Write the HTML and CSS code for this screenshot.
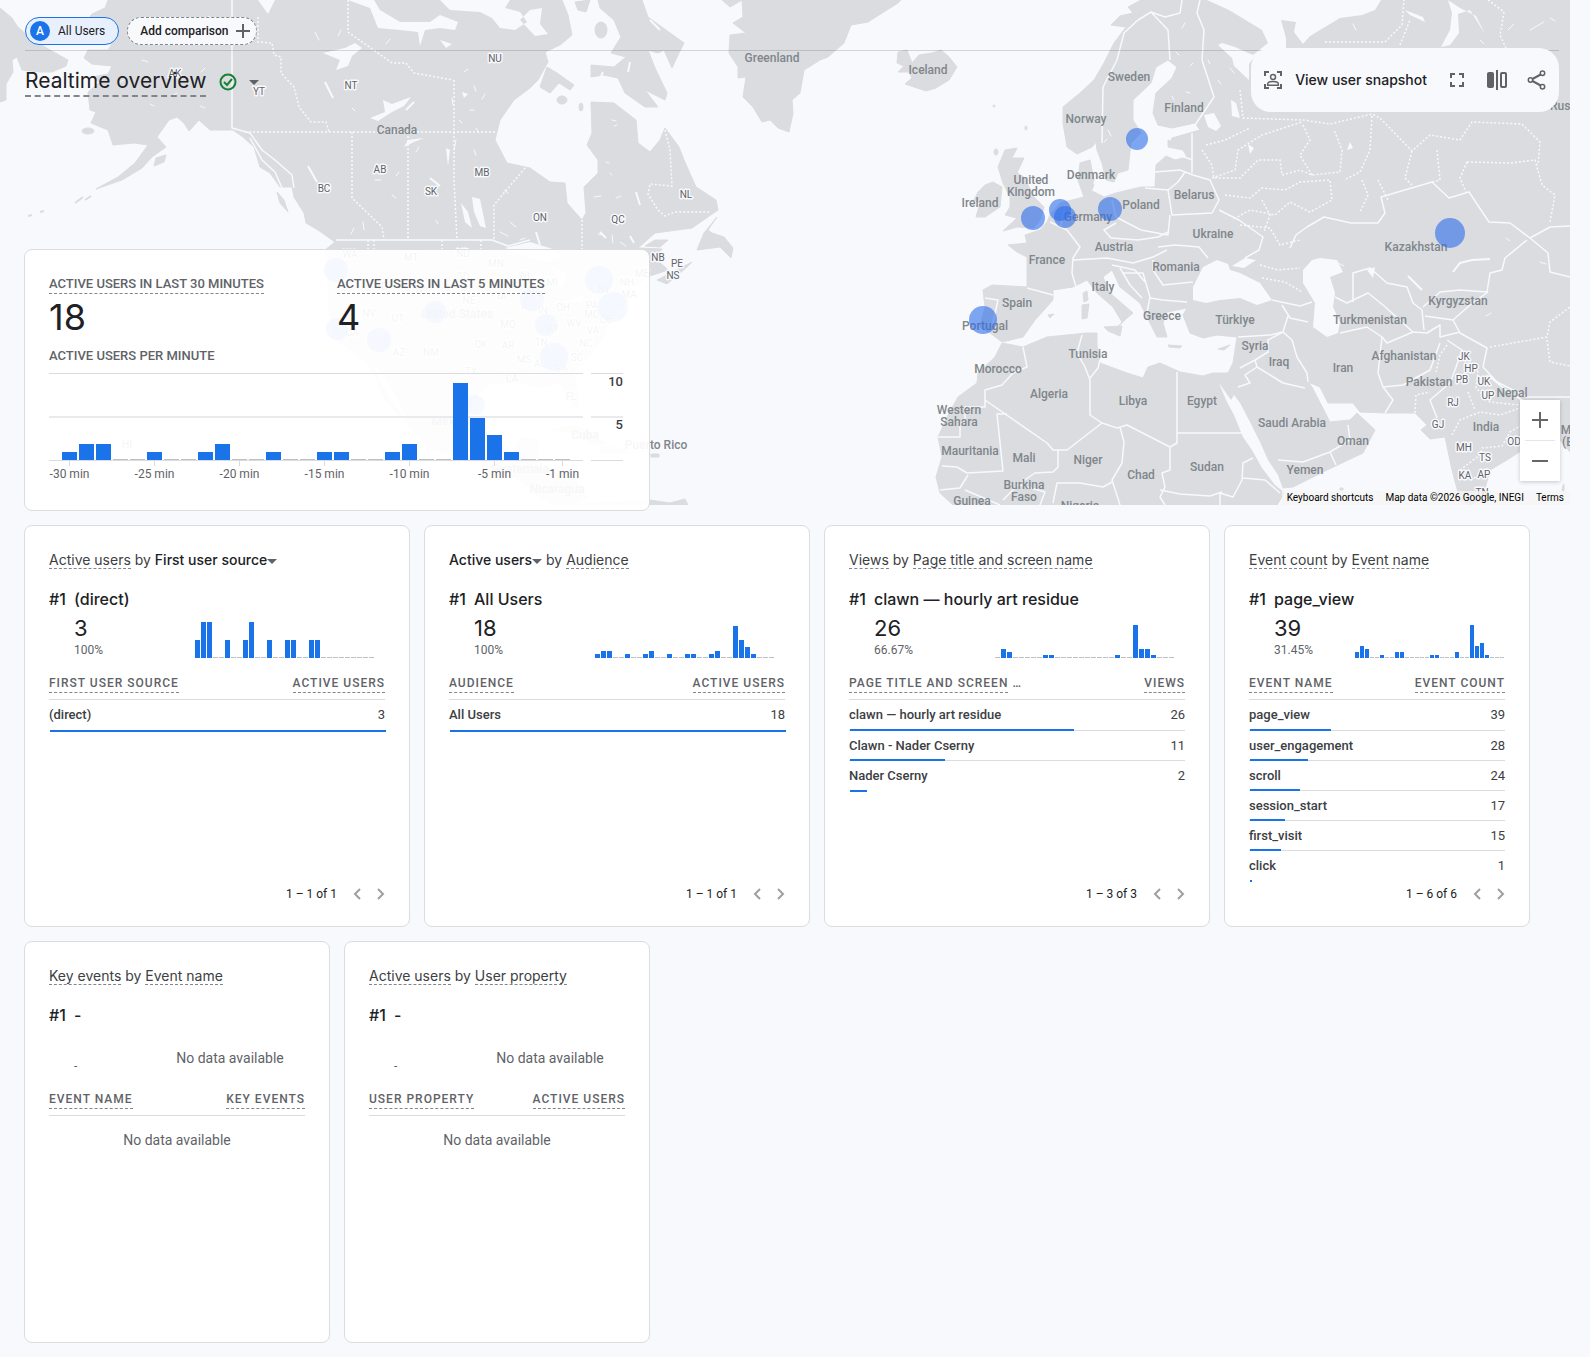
FILE: index.html
```html
<!DOCTYPE html>
<html lang="en">
<head>
<meta charset="utf-8">
<meta name="viewport" content="width=device-width, initial-scale=1">
<title>Realtime overview</title>
<link rel="stylesheet" href="styles.css">
</head>
<body>
<div class="map">
<svg class="map-canvas" viewBox="0 0 1570 505" preserveAspectRatio="xMidYMin slice" aria-label="Map of active users">
  <g class="land">
    <path d="M0 8L12 18 17 26 30 38 50 50 68 60 66 66 52 72 40 72 22 70 17 57 12 60 13 72 6 84 6 100 0 102Z"/>
    <path d="M108 0L105 8 92 14 86 22 90 34 112 44 108 50 88 50 84 58 92 64 112 66 108 74 92 77 100 82 88 92 90 110 96 112 91 123 108 130 113 145 134 143 148 145 135 163 118 177 96 189 122 180 142 168 152 157 166 147 157 137 169 120 177 117 184 123 189 131 199 120 210 130 233 130 243 137 254 147 260 167 270 173 280 187 292 187 294 197 304 213 306 223 318 230 335 242 325 250 328 283 328 307 333 337 350 350 367 362 373 373 385 400 400 417 410 425 390 400 378 377 372 363 383 373 400 403 410 427 430 447 463 460 490 467 520 480 533 493 553 505 573 505 587 497 572 473 537 467 538 440 520 437 513 453 493 457 477 440 470 420 473 400 490 383 520 383 540 387 560 383 577 410 578 393 573 373 597 347 603 337 610 317 627 303 630 290 647 277 668 270 655 258 662 249 638 248 655 233 692 228 718 210 716 200 696 187 684 160 679 147 665 128 660 140 650 152 638 143 636 120 614 103 591 102 592 133 587 145 598 160 598 173 584 187 586 213 582 220 567 203 565 183 550 182 530 168 507 163 495 140 500 120 514 100 530 88 538 80 548 62 545 52 560 45 572 35 568 15 562 0Z"/>
    <path d="M598 0L642 0 648 17 666 30 684 43 679 53 672 68 664 50 658 53 648 50 655 68 667 93 665 100 645 90 658 107 645 107 625 93 618 78 604 75 591 77 591 65 614 67 626 57 611 53 621 37 614 20 600 8Z"/>
    <path d="M547 67L557 73 574 85 570 90 559 83 550 93 540 87ZM717 217L704 233 697 250 720 247 731 258 733 248 724 237 712 233 708 230ZM657 280L673 272 692 262 687 267 667 284ZM645 246L655 240 668 240 660 247ZM575 2L590 0 586 12 578 10ZM156 158L166 155 164 162 154 166Z"/>
    <ellipse cx="601" cy="30" rx="6" ry="8"/><ellipse cx="562" cy="100" rx="5" ry="4"/><ellipse cx="581" cy="107" rx="2" ry="4"/><ellipse cx="88" cy="131" rx="6" ry="3"/>
    <path d="M75 203l8-6M85 200l6-4M28 216l4-1M40 212l4-1" class="islet"/>
    <path d="M277 192L284 200 288 212 280 203ZM553 430L575 425 600 440 610 445 590 443 570 432ZM600 447L622 448 630 453 602 454ZM651 454h8v3h-8ZM650 500L670 503 685 499 688 505 560 505Z"/>
    <path d="M722 0L730 7 742 0 743 17 733 23 746 33 730 35 729 53 738 67 738 78 746 77 743 97 753 107 762 122 770 120 778 128 789 132 793 113 792 100 800 93 804 70 817 62 820 60 828 57 844 43 851 25 868 22 898 3 901 0Z"/>
    <path d="M897 63L898 52 907 50 912 63 919 55 932 53 941 50 949 57 957 67 949 80 936 88 926 91 905 84 912 78 909 72 898 72 904 66Z"/>
    <path d="M1005 150L1017 148 1012 158 1024 158 1017 173 1024 177 1034 197 1044 207 1040 220 1034 228 1017 227 1003 231 1017 218 1005 215 1010 207 1010 197 1003 183 998 167ZM978 192L985 185 993 182 1002 187 1000 207 985 217 976 217 980 203 974 200Z"/>
    <ellipse cx="994" cy="106" rx="1" ry="1"/><ellipse cx="1026" cy="128" rx="1" ry="2"/><ellipse cx="996" cy="152" rx="2" ry="3"/>
    <path d="M1141 0L1128 7 1133 13 1120 16 1111 25 1126 27 1114 43 1104 63 1094 80 1080 93 1063 107 1063 123 1067 147 1077 154 1092 147 1096 142 1097 150 1102 163 1106 180 1114 182 1118 173 1128 170 1131 143 1141 133 1133 120 1133 100 1151 83 1156 67 1168 60 1177 67 1172 78 1156 93 1153 113 1158 125 1172 128 1195 123 1200 130 1172 138 1168 147 1183 150 1187 157 1175 160 1166 156 1156 165 1155 187 1141 187 1116 193 1104 197 1090 190 1094 180 1090 160 1080 163 1078 180 1084 197 1060 203 1050 215 1047 222 1040 230 1025 235 1027 243 1008 245 1017 252 1027 257 1027 287 992 285 983 290 985 307 980 327 990 333 1002 342 1023 337 1035 320 1053 300 1053 290 1073 287 1087 280 1097 293 1113 307 1122 322 1117 328 1127 318 1133 313 1110 293 1103 277 1112 270 1120 287 1140 303 1147 317 1157 337 1167 337 1163 323 1167 312 1187 308 1183 315 1190 333 1203 338 1217 335 1237 337 1233 363 1228 373 1213 373 1203 376 1180 372 1160 363 1148 367 1143 378 1127 373 1100 363 1097 345 1097 333 1087 333 1047 337 1023 347 1002 343 995 357 978 373 977 383 958 397 948 415 938 437 942 457 936 477 940 493 953 505 1277 505 1284 494 1282 488 1293 487 1327 470 1363 453 1375 430 1357 413 1350 420 1330 422 1312 387 1308 382 1320 387 1328 403 1353 403 1360 412 1387 413 1415 413 1427 425 1421 430 1430 439 1445 437 1452 470 1460 500 1470 505 1482 500 1490 470 1507 460 1527 447 1560 440 1570 452 1570 0Z"/>
    <path d="M1083 293L1087 291 1088 300 1084 302ZM1082 305L1089 304 1087 318 1082 319ZM1104 327L1122 326 1120 336 1108 331ZM1168 345L1182 346 1180 348 1169 347ZM1218 349L1230 345 1224 350ZM1048 315L1054 314 1050 318ZM1563 485l1-1v7h-2ZM1088 184L1094 184 1092 190ZM1116 168L1119 160 1117 170ZM1168 140L1174 143 1168 146ZM1340 488h3v2h-3Z"/>
  </g>
  <g class="water">
    <path d="M348 0L370 8 378 28 400 30 418 32 420 46 425 30 440 28 455 30 458 22 440 15 430 22 400 22 380 10 374 0ZM440 0L450 10 480 12 492 18 500 28 515 30 527 22 520 12 505 8 510 0ZM323 53L345 48 355 43 362 48 352 56 348 66 336 70 340 60ZM370 118L385 112 383 100 392 104 411 97 404 106 392 112 378 121ZM404 147L408 140 424 138 414 142ZM472 197L480 199 486 228 480 226 474 212ZM461 203L468 212 472 228 465 222ZM520 20L530 10 542 8 540 24 548 34 535 36ZM440 40L452 44 446 48ZM462 92L468 94 464 98ZM446 148L450 150 448 166ZM258 0L275 0 268 14Z"/>
    <path d="M505 248L530 242 556 250 562 258 545 262 530 258ZM533 275L541 270 539 300 533 300ZM551 266L568 275 560 290ZM563 303L586 294 580 302ZM590 290L604 286 600 292ZM1118 176l4-6M1107 185l2-4"/>
    <path d="M1207 0L1229 10 1262 30 1268 43 1253 55 1235 47 1222 43 1218 45 1232 58 1234 66 1249 80 1249 64 1256 55 1270 50 1286 48 1286 38 1281 20 1296 22 1294 32 1303 44 1310 36 1325 27 1340 18 1362 15 1375 10 1381 0ZM1395 0L1405 10 1423 17 1425 22 1410 15ZM1448 0L1452 13 1450 30 1441 47 1450 45 1459 33 1458 14 1470 10 1485 34 1476 16 1460 8Z"/>
    <path d="M1204 115L1214 113 1221 126 1216 131 1208 127ZM1231 100L1236 103 1240 118 1232 116ZM1193 287L1203 267 1217 260 1228 264 1230 270 1240 273 1260 283 1272 300 1257 305 1240 298 1220 300 1206 303 1193 300ZM1232 266L1245 258 1256 260 1244 268ZM1303 270L1312 260 1320 258 1337 260 1343 272 1330 277 1335 293 1333 307 1340 322 1338 333 1327 337 1313 327 1315 303 1303 283ZM1367 270L1375 267 1373 278ZM1219 383L1226 400 1234 415 1243 437 1252 450 1262 468 1275 485 1284 492 1278 475 1268 460 1260 442 1250 422 1240 403 1234 395 1231 400ZM1248 144L1254 148 1250 154ZM1350 142L1353 148 1347 150ZM1176 75l2 3M1150 22l5 6"/>
    <path class="lake-line" d="M1453 272L1460 263 1472 260 1490 259M1408 276L1422 290M308 166L317 182M325 82L333 98M430 178L440 186M414 102L406 110M597 85L603 72M636 192L640 205M600 232L606 238M630 236L634 243M536 232L540 245M630 62L628 72M650 20L660 30"/>
    <path class="pond-line" d="M315 32l4 8M338 36l3-6M386 44l4-5M352 108l3 3M375 180h6M396 176l3-4M416 152l3-5M436 220l2 4M354 228l-3 6M363 222l1 8M392 195l4 3M452 98l1 7M464 72l4-3M474 86l2 5M485 94l-3 5M470 110h4M459 120l3 3M476 128l3 5M456 140l-2 10M474 150l2 5M612 120l4 1M614 126l3-1M606 162l3 1M610 173l2 2M594 197l7-1M616 198l5-2M612 235l1 8M598 234l5 1M620 242l6 4M640 120l6 6M500 232l8 4M510 222l6 5M520 240l5-2M504 190l4 3M120 82l6-3M150 104l4 2M172 96l5-3M205 68l-4 4M142 60l6 2M160 36l-8 4M182 24l5 4M208 16l5 3M226 40l-4 5M200 106l5 2M1182 28l3-5M1176 52l3 3M1190 66l3-3M1186 92l4 1M1172 96l2 4M1208 60l2 4M1218 80l3 4M1230 68l4 5M1108 130l3 6M1104 142l3-3M1508 30l6-6M1530 30l14-8M1480 40l4 4M1524 60l-6 8M1550 18l5 3M1356 30l-3-6M1506 238l4 3M1540 262l6 2M1486 316l5-3M1336 262l8 4"/>
  </g>
  <g class="border">
    <path d="M232 0V128L250 133 262 150 275 160 292 175 294 188M336 240H492L508 246 530 240M250 138L262 160 275 172 282 188"/>
    <path d="M1102 143L1103 87 1117 60 1124 33 1138 20 1151 12 1168 30 1170 60M1151 12L1165 17 1180 13 1182 0M1200 0L1197 13 1204 30 1202 60 1214 97 1195 125M1192 133V173M1172 153L1193 160M1155 172L1180 170 1193 175 1210 180 1219 200 1212 213 1172 215 1168 190 1178 182 1185 172M1168 190L1145 188M1170 215L1168 235 1141 230 1116 217 1112 200M1219 210L1239 220 1263 237 1259 250 1245 258M1116 223L1104 230 1111 238 1138 240 1158 237 1168 232M1158 247L1175 245 1199 247 1208 258M1050 222L1067 230 1080 247 1073 258 1072 273 1076 287M1065 205L1062 220 1060 228M1073 260L1107 258 1133 263 1153 257 1167 250M1123 273L1143 273 1150 297 1147 313M1153 260V270L1163 285 1193 282M1150 298L1163 300 1187 302M1027 288L1053 295M985 298L998 300 992 327M1112 265L1135 270 1145 282M1120 268L1130 285 1142 298"/>
    <path d="M1023 347L1027 367 1013 373 1002 385 985 390V400L1047 443 1053 450H1067L1102 423 1090 415V380L1085 367 1077 353 1082 335M1100 360L1098 368 1090 378M1102 423L1117 428 1127 425 1170 447 1177 443V372M1177 433H1243M1170 447V470L1162 473 1165 487 1160 497 1165 505M1120 427L1124 442 1122 463 1112 480 1120 505M1112 482L1103 487 1080 483 1057 483 1053 503M1058 450V467L1053 472 1035 473 1020 483 1003 500M985 400V407H965V423H960V437H938M1007 414H997L1003 471 967 473 957 467 942 466M940 490L960 488 968 475M1253 458L1243 463 1242 480 1233 497 1220 493V505M1243 478L1265 480 1280 493M1160 490L1180 494 1210 496 1222 492M965 490L1000 505M1020 485L1045 492 1040 505"/>
    <path d="M1238 337L1270 335 1283 332 1292 340 1297 357 1307 373 1308 382M1283 332L1268 340V352L1255 360 1240 368M1255 360L1257 367 1283 383 1305 388M1257 367L1245 375 1250 383 1238 387M1278 460L1303 462 1330 452 1350 440 1348 425M1330 452L1336 465M1382 337L1378 373 1383 387 1393 400 1385 413M1340 333L1367 327 1382 337 1387 343 1413 332 1427 333 1440 325V337L1460 332M1383 387L1403 385 1430 370 1440 343M1447 340L1462 350 1455 370 1450 383 1430 400 1437 418M1353 302V273L1370 268 1387 283 1407 287 1413 303 1422 310 1424 330M1335 297L1347 303 1368 293 1383 305 1413 332M1423 307L1440 292 1460 290 1487 292 1490 273 1502 270 1505 258 1527 240M1425 316L1453 320 1470 305 1488 292M1282 305L1290 318 1308 322M1272 300L1300 306 1312 302M1283 332L1288 316"/>
    <path d="M1290 248L1296 235 1307 227 1324 217 1351 223 1378 223 1385 213 1381 197 1432 182 1449 198 1469 192 1489 222 1510 223 1530 238 1550 227 1570 226M1530 238L1548 253 1550 272 1570 277M1453 320L1460 333 1487 348 1483 367 1497 382 1527 397H1570M1487 375L1510 393 1527 403"/>
  </g>
  <g class="region">
    <path d="M258 17V42L272 43 274 55 281 57V73L294 87 299 107 311 122H326L329 132M245 132H495M352 132V198L382 227 384 240M408 132V240M454 80V180L457 240M348 0V32L392 63H406L414 73 453 80M525 168L494 205V240M582 220V260M665 130L670 150 672 186 650 184 648 194 658 210 665 216 675 212H710"/>
    <path d="M368 240V262M374 240V300M442 240V280M481 240V290M340 265H370M328 297H400M380 297V340M360 297L362 320 385 345M400 340V365M410 300V340M442 310H500M442 280H482M481 290H520M495 325H530M500 345H600M455 345V375M520 350V380M533 350V382M550 345V380M500 370H515M580 249V260M545 300V320M565 300V318"/>
    <path d="M1240 90L1243 118 1303 120 1330 124 1372 114 1380 118 1412 151 1430 135 1460 140 1472 122 1522 124 1540 142 1538 165M1206 145L1225 140 1250 128M1212 178L1235 170 1238 150 1262 135 1302 122M1202 150L1212 165 1214 178 1240 178 1258 160 1280 160 1282 175 1300 170 1312 175 1340 172 1342 150 1334 130M1303 125L1310 140 1300 155 1312 175M1372 116L1370 150 1360 172 1344 180M1225 195L1250 198 1262 188 1285 190 1300 182 1330 180 1332 200 1310 212 1290 202 1275 215 1250 210 1232 220M1240 225L1270 228 1280 245 1300 240M1412 151L1405 178 1412 185M1437 150L1440 180 1432 182M1467 162L1460 178 1466 192M1467 162L1510 163 1535 160 1542 185 1555 195 1550 222M1325 42H1385L1402 25 1404 0M1400 45L1410 20M1488 0L1504 12 1500 35 1506 48M1262 200L1270 215 1264 232M1362 180L1368 195 1360 212M1378 180L1388 200"/>
    <path d="M1490 347L1547 337 1550 322 1570 307M1547 340L1550 362 1570 366M1415 413L1416 395 1430 392M1447 345L1440 355 1436 372M1465 360L1478 372 1476 388 1490 402 1520 405M1452 435L1460 420 1480 412 1500 415 1520 408M1460 470L1480 455 1482 448 1502 446 1510 432 1530 420M1468 392L1475 410M1470 480L1490 470M1260 265L1278 270 1300 268M1262 278L1285 282 1302 292"/>
  </g>
  <g class="country">
    <text x="397" y="134">Canada</text><text x="772" y="62">Greenland</text><text x="928" y="74">Iceland</text><text x="980" y="207">Ireland</text><text x="1031" y="184">United</text><text x="1031" y="196">Kingdom</text><text x="1129" y="81">Sweden</text><text x="1086" y="123">Norway</text><text x="1184" y="112">Finland</text><text x="1091" y="179">Denmark</text><text x="1088" y="221">Germany</text><text x="1141" y="209">Poland</text><text x="1194" y="199">Belarus</text><text x="1114" y="251">Austria</text><text x="1213" y="238">Ukraine</text><text x="1416" y="251">Kazakhstan</text><text x="1568" y="110">Russia</text>
    <text x="1047" y="264">France</text><text x="1176" y="271">Romania</text><text x="1103" y="291">Italy</text><text x="1017" y="307">Spain</text><text x="985" y="330">Portugal</text><text x="1162" y="320">Greece</text><text x="1235" y="324">Türkiye</text><text x="1088" y="358">Tunisia</text><text x="998" y="373">Morocco</text><text x="1049" y="398">Algeria</text><text x="1133" y="405">Libya</text><text x="1202" y="405">Egypt</text><text x="959" y="414">Western</text><text x="959" y="426">Sahara</text><text x="970" y="455">Mauritania</text><text x="1024" y="462">Mali</text><text x="1088" y="464">Niger</text><text x="1141" y="479">Chad</text><text x="1207" y="471">Sudan</text><text x="1024" y="489">Burkina</text><text x="1024" y="501">Faso</text><text x="972" y="505">Guinea</text><text x="1080" y="510">Nigeria</text>
    <text x="1255" y="350">Syria</text><text x="1279" y="366">Iraq</text><text x="1343" y="372">Iran</text><text x="1370" y="324">Turkmenistan</text><text x="1458" y="305">Kyrgyzstan</text><text x="1404" y="360">Afghanistan</text><text x="1429" y="386">Pakistan</text><text x="1512" y="397">Nepal</text><text x="1486" y="431">India</text><text x="1292" y="427">Saudi Arabia</text><text x="1353" y="445">Oman</text><text x="1305" y="474">Yemen</text><text x="1586" y="434">Myanmar</text><text x="1584" y="446">(Burma)</text>
    <text x="457" y="318">United States</text><text x="451" y="425">Mexico</text><text x="585" y="439">Cuba</text><text x="656" y="449">Puerto Rico</text><text x="520" y="473">Guatemala</text><text x="557" y="493">Nicaragua</text>
  </g>
  <g class="state">
    <text x="175" y="77">AK</text><text x="259" y="95">YT</text><text x="351" y="89">NT</text><text x="495" y="62">NU</text><text x="380" y="173">AB</text><text x="324" y="192">BC</text><text x="431" y="195">SK</text><text x="482" y="176">MB</text><text x="540" y="221">ON</text><text x="618" y="223">QC</text><text x="686" y="198">NL</text><text x="658" y="261">NB</text><text x="677" y="267">PE</text><text x="673" y="279">NS</text><text x="127" y="448">HI</text>
    <text x="350" y="258">WA</text><text x="411" y="261">MT</text><text x="463" y="257">ND</text><text x="496" y="267">MN</text><text x="524" y="279">WI</text><text x="463" y="280">SD</text><text x="552" y="286">MI</text><text x="642" y="277">ME</text><text x="627" y="286">NH</text><text x="604" y="293">NY</text><text x="629" y="298">MA</text><text x="383" y="290">ID</text><text x="422" y="293">WY</text><text x="469" y="304">NE</text><text x="502" y="300">IA</text><text x="525" y="309">IL</text><text x="543" y="314">IN</text><text x="563" y="311">OH</text><text x="592" y="309">PA</text><text x="592" y="318">MD</text><text x="606" y="323">DE</text><text x="369" y="317">NV</text><text x="398" y="322">UT</text><text x="508" y="328">MO</text><text x="553" y="332">KY</text><text x="574" y="327">WV</text><text x="593" y="334">VA</text><text x="352" y="336">CA</text><text x="399" y="356">AZ</text><text x="431" y="356">NM</text><text x="481" y="348">OK</text><text x="508" y="349">AR</text><text x="541" y="346">TN</text><text x="586" y="347">NC</text><text x="524" y="363">MS</text><text x="577" y="361">SC</text><text x="540" y="367">AL</text><text x="561" y="372">GA</text><text x="471" y="375">TX</text><text x="512" y="382">LA</text><text x="571" y="400">FL</text>
    <text x="1464" y="360">JK</text><text x="1471" y="372">HP</text><text x="1462" y="383">PB</text><text x="1484" y="385">UK</text><text x="1488" y="399">UP</text><text x="1453" y="406">RJ</text><text x="1438" y="428">GJ</text><text x="1464" y="451">MH</text><text x="1514" y="445">OD</text><text x="1485" y="461">TS</text><text x="1465" y="479">KA</text><text x="1484" y="478">AP</text><text x="1482" y="496">TN</text>
  </g>
  <g class="users">
    <circle cx="1137" cy="139" r="11"/><circle cx="1110" cy="209" r="12"/><circle cx="1060" cy="210" r="11"/><circle cx="1065" cy="217" r="11"/><circle cx="1033" cy="218" r="12"/><circle cx="1450" cy="233" r="15"/><circle cx="983" cy="320" r="14"/>
    <circle cx="336" cy="270" r="12"/><circle cx="337" cy="329" r="11"/><circle cx="379" cy="340" r="12"/><circle cx="435" cy="312" r="11"/><circle cx="532" cy="299" r="12"/><circle cx="546" cy="325" r="11"/><circle cx="554" cy="357" r="14"/><circle cx="599" cy="280" r="14"/><circle cx="613" cy="307" r="15"/><circle cx="475" cy="405" r="10"/>
  </g>
</svg>
<div class="map-zoom">
  <button type="button" aria-label="Zoom in"><svg width="16" height="16" viewBox="0 0 16 16"><path d="M8 0v16M0 8h16"/></svg></button>
  <button type="button" aria-label="Zoom out"><svg width="16" height="16" viewBox="0 0 16 16"><path d="M0 8h16"/></svg></button>
</div>
<div class="map-credit"><button type="button">Keyboard shortcuts</button><span>Map data ©2026 Google, INEGI</span><a href="#terms">Terms</a></div>
</div>

<header class="comparisons">
  <button type="button" class="chip chip-active"><span class="avatar">A</span>All Users</button>
  <button type="button" class="chip chip-add">Add comparison<svg width="14" height="14" viewBox="0 0 14 14"><path d="M7 0v14M0 7h14"/></svg></button>
</header>

<div class="title-row">
  <div class="title-group">
    <h1>Realtime overview</h1>
    <svg class="check" width="18" height="18" viewBox="0 0 18 18"><circle cx="9" cy="9" r="7.500"/><path d="M5 9l3 3 5-6"/></svg>
    <button type="button" class="caret-button" aria-label="Report status"><span class="caret"></span></button>
  </div>
  <div class="toolbar">
    <button type="button" class="snapshot">
      <svg width="20" height="20" viewBox="0 0 20 20"><path d="M2 6V2h4M14 2h4v4M18 14v4h-4M6 18H2v-4"/><circle class="thin" cx="10" cy="7" r="2.500"/><path class="thin" d="M4.700 15.300v-1.300c0-1.600 2.500-2.500 5.300-2.500s5.300.9 5.300 2.500v1.300z"/></svg>
      View user snapshot
    </button>
    <button type="button" aria-label="Full screen"><svg width="20" height="20" viewBox="0 0 20 20"><path d="M4 8V4h4M12 4h4v4M16 12v4h-4M8 16H4v-4"/></svg></button>
    <button type="button" aria-label="Edit comparisons"><svg width="20" height="20" viewBox="0 0 20 20"><rect class="solid" x="0" y="2" width="7" height="16" rx="2"/><path d="M10 0v20"/><rect x="14" y="3" width="5" height="14" rx="1"/></svg></button>
    <button type="button" aria-label="Share report"><svg width="20" height="20" viewBox="0 0 20 20"><path d="M15.500 3.500L3.500 10l12 6.500"/><circle class="node" cx="15.500" cy="3.200" r="2.200"/><circle class="node" cx="3.500" cy="10" r="2.200"/><circle class="node" cx="15.500" cy="16.800" r="2.200"/></svg></button>
  </div>
</div>

<main class="cards">
  <section class="card overview">
    <div class="totals">
      <div><h2 class="label"><span class="term">Active users in last 30 minutes</span></h2><p class="big">18</p></div>
      <div><h2 class="label"><span class="term">Active users in last 5 minutes</span></h2><p class="big">4</p></div>
    </div>
    <h2 class="label">Active users per minute</h2>
    <div class="chart">
      <div class="plot">
        <div class="bars">
          <i style="height:8px"></i><i style="height:16px"></i><i style="height:16px"></i><i></i><i></i><i style="height:8px"></i><i></i><i></i><i style="height:8px"></i><i style="height:16px"></i><i></i><i></i><i style="height:8px"></i><i></i><i></i><i style="height:8px"></i><i style="height:8px"></i><i></i><i></i><i style="height:8px"></i><i style="height:16px"></i><i></i><i></i><i style="height:77px"></i><i style="height:42px"></i><i style="height:25px"></i><i style="height:8px"></i><i></i><i></i><i></i>
        </div>
        <div class="ticks">
          <span style="grid-column:1">-30 min</span><span style="grid-column:6">-25 min</span><span style="grid-column:11">-20 min</span><span style="grid-column:16">-15 min</span><span style="grid-column:21">-10 min</span><span style="grid-column:26">-5 min</span><span style="grid-column:30">-1 min</span>
        </div>
      </div>
      <div class="scale"><span>10</span><span>5</span></div>
    </div>
  </section>

  <section class="card">
    <h2 class="card-title"><span class="term">Active users</span> by <button type="button" class="pick">First user source<span class="caret"></span></button></h2>
    <p class="rank"><span>#1</span><span>(direct)</span></p>
    <div class="lead">
      <div class="lead-value"><strong>3</strong><small>100%</small></div>
      <svg class="spark" width="180" height="36" viewBox="0 0 180 36"><path class="zero" d="M0 35.500H180"/><path d="M0 36v-18h5v18zM6 36v-36h5v36zM12 36v-36h5v36zM30 36v-18h5v18zM48 36v-18h5v18zM54 36v-36h5v36zM72 36v-18h5v18zM90 36v-18h5v18zM96 36v-18h5v18zM114 36v-18h5v18zM120 36v-18h5v18z"/></svg>
    </div>
    <table>
      <thead><tr><th><span class="term">First user source</span></th><th><span class="term">Active users</span></th></tr></thead>
      <tbody>
        <tr><td>(direct)<i class="share" style="width:100%"></i></td><td>3</td></tr>
      </tbody>
    </table>
    <nav class="pager"><span>1 – 1 of 1</span><button type="button" aria-label="Previous" disabled><svg width="8" height="12" viewBox="0 0 8 12"><path d="M7 1L2 6l5 5"/></svg></button><button type="button" aria-label="Next" disabled><svg width="8" height="12" viewBox="0 0 8 12"><path d="M1 1l5 5-5 5"/></svg></button></nav>
  </section>

  <section class="card">
    <h2 class="card-title"><button type="button" class="pick">Active users<span class="caret"></span></button> by <span class="term">Audience</span></h2>
    <p class="rank"><span>#1</span><span>All Users</span></p>
    <div class="lead">
      <div class="lead-value"><strong>18</strong><small>100%</small></div>
      <svg class="spark" width="180" height="36" viewBox="0 0 180 36"><path class="zero" d="M0 35.500H180"/><path d="M0 36v-4h5v4zM6 36v-7h5v7zM12 36v-7h5v7zM30 36v-4h5v4zM48 36v-4h5v4zM54 36v-7h5v7zM72 36v-4h5v4zM90 36v-4h5v4zM96 36v-4h5v4zM114 36v-4h5v4zM120 36v-7h5v7zM138 36v-32h5v32zM144 36v-18h5v18zM150 36v-11h5v11zM156 36v-4h5v4z"/></svg>
    </div>
    <table>
      <thead><tr><th><span class="term">Audience</span></th><th><span class="term">Active users</span></th></tr></thead>
      <tbody>
        <tr><td>All Users<i class="share" style="width:100%"></i></td><td>18</td></tr>
      </tbody>
    </table>
    <nav class="pager"><span>1 – 1 of 1</span><button type="button" aria-label="Previous" disabled><svg width="8" height="12" viewBox="0 0 8 12"><path d="M7 1L2 6l5 5"/></svg></button><button type="button" aria-label="Next" disabled><svg width="8" height="12" viewBox="0 0 8 12"><path d="M1 1l5 5-5 5"/></svg></button></nav>
  </section>

  <section class="card">
    <h2 class="card-title"><span class="term">Views</span> by <span class="term">Page title and screen name</span></h2>
    <p class="rank"><span>#1</span><span>clawn — hourly art residue</span></p>
    <div class="lead">
      <div class="lead-value"><strong>26</strong><small>66.67%</small></div>
      <svg class="spark" width="180" height="36" viewBox="0 0 180 36"><path class="zero" d="M0 35.500H180"/><path d="M6 36v-9h5v9zM12 36v-6h5v6zM48 36v-3h5v3zM54 36v-3h5v3zM120 36v-3h5v3zM138 36v-33h5v33zM144 36v-9h5v9zM150 36v-9h5v9zM156 36v-3h5v3z"/></svg>
    </div>
    <table>
      <thead><tr><th><span class="term">Page title and screen</span> …</th><th><span class="term">Views</span></th></tr></thead>
      <tbody>
        <tr><td>clawn — hourly art residue<i class="share" style="width:66.67%"></i></td><td>26</td></tr>
        <tr><td>Clawn - Nader Cserny<i class="share" style="width:28.21%"></i></td><td>11</td></tr>
        <tr><td>Nader Cserny<i class="share" style="width:5.13%"></i></td><td>2</td></tr>
      </tbody>
    </table>
    <nav class="pager"><span>1 – 3 of 3</span><button type="button" aria-label="Previous" disabled><svg width="8" height="12" viewBox="0 0 8 12"><path d="M7 1L2 6l5 5"/></svg></button><button type="button" aria-label="Next" disabled><svg width="8" height="12" viewBox="0 0 8 12"><path d="M1 1l5 5-5 5"/></svg></button></nav>
  </section>

  <section class="card narrow">
    <h2 class="card-title"><span class="term">Event count</span> by <span class="term">Event name</span></h2>
    <p class="rank"><span>#1</span><span>page_view</span></p>
    <div class="lead">
      <div class="lead-value"><strong>39</strong><small>31.45%</small></div>
      <svg class="spark" width="150" height="36" viewBox="0 0 150 36"><path class="zero" d="M0 35.500H150"/><path d="M0 36v-6h4v6zM5 36v-12h4v12zM10 36v-9h4v9zM25 36v-3h4v3zM40 36v-6h4v6zM45 36v-6h4v6zM75 36v-3h4v3zM80 36v-3h4v3zM100 36v-6h4v6zM115 36v-33h4v33zM120 36v-12h4v12zM125 36v-15h4v15zM130 36v-3h4v3z"/></svg>
    </div>
    <table>
      <thead><tr><th><span class="term">Event name</span></th><th><span class="term">Event count</span></th></tr></thead>
      <tbody>
        <tr><td>page_view<i class="share" style="width:31.45%"></i></td><td>39</td></tr>
        <tr><td>user_engagement<i class="share" style="width:22.58%"></i></td><td>28</td></tr>
        <tr><td>scroll<i class="share" style="width:19.35%"></i></td><td>24</td></tr>
        <tr><td>session_start<i class="share" style="width:13.71%"></i></td><td>17</td></tr>
        <tr><td>first_visit<i class="share" style="width:12.1%"></i></td><td>15</td></tr>
        <tr><td>click<i class="share" style="width:0.81%"></i></td><td>1</td></tr>
      </tbody>
    </table>
    <nav class="pager"><span>1 – 6 of 6</span><button type="button" aria-label="Previous" disabled><svg width="8" height="12" viewBox="0 0 8 12"><path d="M7 1L2 6l5 5"/></svg></button><button type="button" aria-label="Next" disabled><svg width="8" height="12" viewBox="0 0 8 12"><path d="M1 1l5 5-5 5"/></svg></button></nav>
  </section>

  <section class="card narrow">
    <h2 class="card-title"><span class="term">Key events</span> by <span class="term">Event name</span></h2>
    <p class="rank"><span>#1</span><span>-</span></p>
    <div class="lead">
      <div class="lead-value"><strong></strong><small>-</small></div>
      <p class="empty">No data available</p>
    </div>
    <table>
      <thead><tr><th><span class="term">Event name</span></th><th><span class="term">Key events</span></th></tr></thead>
      <tbody><tr class="empty-row"><td colspan="2">No data available</td></tr></tbody>
    </table>
  </section>

  <section class="card narrow">
    <h2 class="card-title"><span class="term">Active users</span> by <span class="term">User property</span></h2>
    <p class="rank"><span>#1</span><span>-</span></p>
    <div class="lead">
      <div class="lead-value"><strong></strong><small>-</small></div>
      <p class="empty">No data available</p>
    </div>
    <table>
      <thead><tr><th><span class="term">User property</span></th><th><span class="term">Active users</span></th></tr></thead>
      <tbody><tr class="empty-row"><td colspan="2">No data available</td></tr></tbody>
    </table>
  </section>
</main>
</body>
</html>
```
FILE: styles.css
```css
* { box-sizing: border-box; }

:root {
  --page: #f8f9fc;
  --land: #dadce0;
  --ink: #202124;
  --text: #3c4043;
  --muted: #5f6368;
  --line: #dadce0;
  --blue: #1a73e8;
  --display: Inter, Roboto, sans-serif;
}

body {
  margin: 0;
  position: relative;
  background: var(--page);
  color: var(--ink);
  font: 12px/16px Roboto, sans-serif;
}

h1, h2, p { margin: 0; font-weight: 400; }

button {
  margin: 0;
  padding: 0;
  border: 0;
  background: none;
  color: inherit;
  font: inherit;
  cursor: pointer;
}

svg { display: block; }

/* Map */
.map {
  position: absolute;
  top: 0;
  left: 0;
  right: 20px;
  height: 505px;
  overflow: hidden;
}
.map-canvas { width: 100%; height: 100%; }
.land { fill: var(--land); stroke: var(--land); stroke-width: 1; stroke-linejoin: round; }
.islet { stroke-width: 2; }
.water { fill: var(--page); }
.lake-line { fill: none; stroke: var(--page); stroke-width: 2; }
.pond-line { fill: none; stroke: var(--page); stroke-width: 1; stroke-linecap: round; }
.border { fill: none; stroke: var(--page); stroke-width: 1.500; stroke-linejoin: round; }
.region { fill: none; stroke: var(--page); stroke-width: 1.500; stroke-dasharray: 2 2; }
.country { fill: #80868b; font: 500 12px Roboto, sans-serif; text-anchor: middle; }
.state {
  fill: #5f6368;
  font: 10px Roboto, sans-serif;
  text-anchor: middle;
  stroke: var(--page);
  stroke-width: 3px;
  stroke-linejoin: round;
  paint-order: stroke;
}
.users { fill: #2c6dea; fill-opacity: .6; }

.map-zoom {
  position: absolute;
  right: 10px;
  bottom: 24px;
  width: 40px;
  padding: 0 5px;
  background: #fff;
  box-shadow: 0 1px 4px rgba(0, 0, 0, .2);
}
.map-zoom button { display: grid; place-items: center; width: 100%; height: 40px; }
.map-zoom button + button { border-top: 1px solid #e6e6e6; height: 41px; }
.map-zoom path { stroke: #666; stroke-width: 2; }

.map-credit {
  position: absolute;
  right: 0;
  bottom: 0;
  display: flex;
  gap: 12px;
  padding: 0 6px 0 5px;
  background: rgba(245, 245, 245, .8);
  color: #000;
  font-size: 10px;
  line-height: 14px;
}
.map-credit a { color: inherit; text-decoration: none; }

/* Page header */
.comparisons {
  position: relative;
  display: flex;
  gap: 8px;
  margin: 0 31px 0 25px;
  padding: 17px 0 5px;
  border-bottom: 1px solid rgba(60, 64, 67, .2);
}
.chip {
  display: flex;
  align-items: center;
  height: 28px;
  border-radius: 14px;
  padding: 0 13px 0 4px;
  gap: 8px;
}
.chip-active { border: 1px solid var(--blue); background: #e8f0fe; }
.avatar {
  width: 20px;
  border-radius: 50%;
  background: var(--blue);
  color: #fff;
  font-weight: 500;
  line-height: 20px;
}
.chip-add { padding: 0 6px 0 12px; border: 1px dashed #80868b; background: var(--page); font-weight: 500; }
.chip-add path { stroke: var(--muted); stroke-width: 2; }

.title-row {
  position: relative;
  display: flex;
  justify-content: space-between;
  align-items: flex-start;
  margin: 0 31px 0 25px;
}
.title-group { display: flex; align-items: center; padding-top: 16px; }
.title-group h1 {
  border-bottom: 2px dashed #80868b;
  font: 400 21px/28px var(--display);
}
.check { margin-left: 13px; fill: none; stroke: #188038; stroke-width: 2; }
.caret-button { margin-left: 12px; }
.caret {
  display: inline-block;
  border: 5px solid transparent;
  border-top-color: var(--muted);
  border-bottom: 0;
  vertical-align: middle;
}

.toolbar {
  display: flex;
  align-items: center;
  gap: 20px;
  height: 64px;
  margin-top: -3px;
  padding: 0 12px;
  border-radius: 20px;
  background: var(--page);
}
.toolbar svg { fill: none; stroke: var(--muted); stroke-width: 2; }
.toolbar .thin, .toolbar .node { stroke-width: 1.500; }
.toolbar .node { fill: var(--page); }
.toolbar .solid { fill: var(--muted); stroke: none; }
.snapshot {
  display: flex;
  align-items: center;
  gap: 12px;
  font: 500 14px/20px var(--display);
  color: var(--ink);
}

/* Cards */
.cards {
  position: relative;
  display: grid;
  grid-template-columns: repeat(19, minmax(0, 1fr));
  gap: 14px;
  padding: 137px 60px 14px 24px;
}
.card {
  grid-column: span 5;
  display: flex;
  flex-direction: column;
  min-height: 402px;
  padding: 24px;
  border: 1px solid var(--line);
  border-radius: 8px;
  background: #fff;
}
.narrow { grid-column: span 4; }
.overview {
  grid-column: 1 / span 8;
  min-height: 262px;
  background: rgba(255, 255, 255, .93);
}
.card:nth-child(2) { grid-column: 1 / span 5; }

.term { border-bottom: 1px dashed #80868b; }

.label {
  color: var(--muted);
  font-size: 13px;
  font-weight: 500;
  line-height: 18px;
  text-transform: uppercase;
}
.totals { display: grid; grid-template-columns: 1fr 1fr; padding-top: 1px; }
.label .term, th .term { display: inline-block; line-height: 18px; }
.big { font: 400 36px/46px var(--display); }
.overview > .label { margin-top: 7px; }

.chart { display: flex; gap: 8px; margin-top: 8px; padding-right: 2px; }
.plot { flex: 1; }
.bars, .scale {
  height: 88px;
  background:
    linear-gradient(var(--line), var(--line)) 0 0 / 100% 1px no-repeat,
    linear-gradient(#e8eaed, #e8eaed) 0 43px / 100% 2px no-repeat,
    linear-gradient(var(--line), var(--line)) 0 100% / 100% 1px no-repeat;
}
.bars, .ticks { display: grid; grid-template-columns: repeat(30, minmax(0, 1fr)); column-gap: 2px; padding: 0 13px; }
.bars { align-items: end; padding-bottom: 1px; }
.bars i { height: 1px; background: var(--blue); }
.bars i:not([style]) { background: #bdc1c6; }
.ticks { color: var(--muted); }
.ticks span { display: flex; flex-direction: column; align-items: center; white-space: nowrap; }
.ticks span::before { content: ""; width: 1px; height: 5px; background: var(--line); }
.scale {
  width: 32px;
  display: grid;
  grid-template-rows: 43px 43px;
  color: var(--text);
  font-size: 13px;
  font-weight: 500;
  line-height: 18px;
  text-align: right;
}

.card-title { color: var(--text); font: 400 14px/20px var(--display); white-space: nowrap; }
.pick { color: var(--ink); font-weight: 500; }
.rank { display: grid; grid-template-columns: 25px 1fr; margin-top: 17px; font: 500 16px/24px var(--display); white-space: nowrap; }
.lead { display: grid; grid-template-columns: 1fr 190px; align-items: end; margin-top: 3px; }
.narrow .lead { grid-template-columns: 1fr 150px; }
.lead-value { display: grid; grid-template-rows: 28px 16px; padding-left: 25px; }
.lead-value strong { font: 400 22px/28px var(--display); }
.lead-value small { color: var(--muted); font-size: 12px; }
.spark { fill: var(--blue); }
.zero { stroke: #bdc1c6; stroke-dasharray: 5 1; }
.narrow .zero { stroke-dasharray: 4 1; }
.empty { color: var(--muted); font-size: 14px; line-height: 32px; text-align: center; }

table { width: 100%; margin-top: 16px; border-collapse: collapse; }
th {
  padding: 0 0 6px;
  border-bottom: 1px solid var(--line);
  color: var(--muted);
  font-weight: 500;
  line-height: 18px;
  letter-spacing: 1px;
  text-align: left;
  text-transform: uppercase;
  white-space: nowrap;
}
td { height: 30px; padding: 0; color: var(--text); font-size: 13px; font-weight: 500; white-space: nowrap; }
tbody tr { position: relative; border-bottom: 1px solid var(--line); }
tbody tr:last-child { border-bottom: 0; }
tbody tr:first-child td { height: 31px; }
th:last-child, td:last-child { text-align: right; }
td:last-child { font-weight: 400; }
.share { position: absolute; left: 1px; bottom: -1px; height: 2px; background: var(--blue); }
.empty-row td:last-child { height: 48px; color: var(--muted); font-size: 14px; text-align: center; }

.pager { display: flex; align-items: center; justify-content: flex-end; gap: 16px; margin-top: auto; }
.pager path { fill: none; stroke: #9aa0a6; stroke-width: 2; }
```
